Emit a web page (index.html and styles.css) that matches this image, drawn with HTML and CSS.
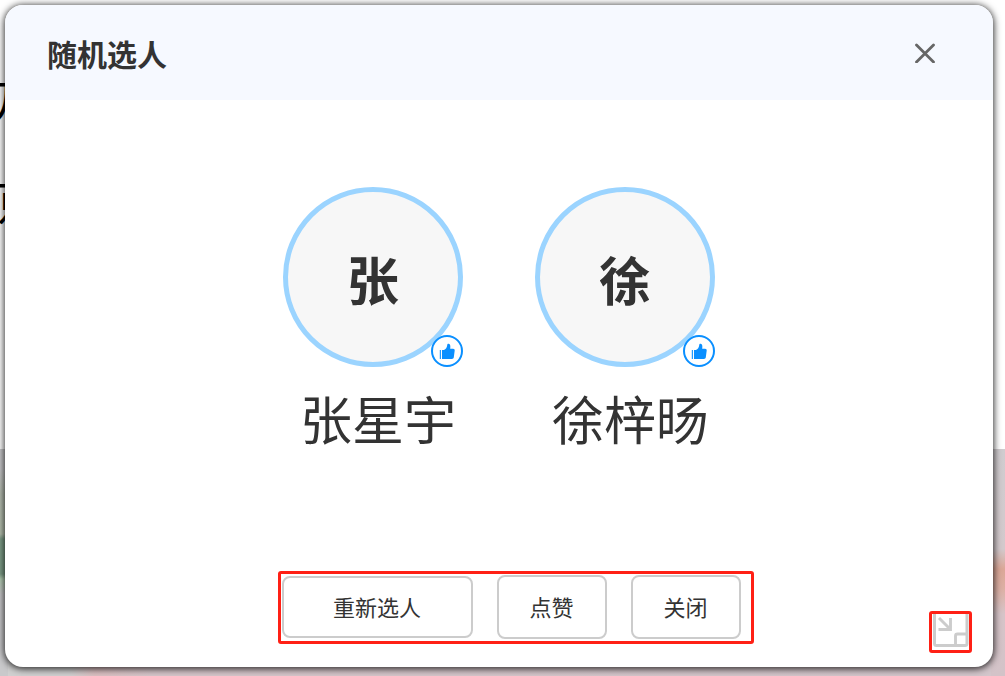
FILE: index.html
```html
<!DOCTYPE html>
<html lang="zh-CN">
<head>
<meta charset="utf-8">
<title>随机选人</title>
<link rel="stylesheet" href="styles.css">
</head>
<body>
<div class="backdrop" aria-hidden="true">
  <div class="backdrop-text"><span>万</span><span>原</span></div>
  <div class="backdrop-photo"></div>
</div>
<section class="dialog" role="dialog" aria-labelledby="dialog-title">
  <header class="dialog-header">
    <h1 class="dialog-title" id="dialog-title">随机选人</h1>
    <button class="icon-button" type="button" aria-label="关闭窗口">
      <svg width="20" height="20" viewBox="0 0 20 20" fill="none" stroke="#666" stroke-width="2.8" stroke-linecap="round"><path d="M1.5 2 18.5 19M18.5 2 1.5 19"/></svg>
    </button>
  </header>
  <main class="people">
    <article class="person">
      <div class="avatar">张
        <button class="like" type="button" aria-label="为张星宇点赞">
          <svg width="16" height="16" viewBox="0 0 16 16" fill="#0a8fff"><path d="M.8 7H1.900v9H.8zM3 7h1.900C6.800 6 8 4.500 8.200 2.200 8.300 1 8.900.7 9.700.8c1.600.3 1.900 2.300 1.500 5h2.900c1.100 0 1.700.8 1.600 1.700l-.9 6.800c-.1 1-.9 1.700-1.900 1.700H3z"/></svg>
        </button>
      </div>
      <p class="name">张星宇</p>
    </article>
    <article class="person">
      <div class="avatar">徐
        <button class="like" type="button" aria-label="为徐梓旸点赞">
          <svg width="16" height="16" viewBox="0 0 16 16" fill="#0a8fff"><path d="M.8 7H1.900v9H.8zM3 7h1.900C6.800 6 8 4.500 8.200 2.200 8.300 1 8.900.7 9.700.8c1.600.3 1.900 2.300 1.500 5h2.900c1.100 0 1.700.8 1.600 1.700l-.9 6.800c-.1 1-.9 1.700-1.900 1.700H3z"/></svg>
        </button>
      </div>
      <p class="name">徐梓旸</p>
    </article>
  </main>
  <footer class="dialog-footer">
    <div class="actions marked">
      <button class="action action-wide" type="button">重新选人</button>
      <button class="action" type="button">点赞</button>
      <button class="action" type="button">关闭</button>
    </div>
    <button class="minimize marked" type="button" aria-label="最小化">
      <svg width="37" height="36" viewBox="0 0 37 36" fill="none" stroke="#ccc" stroke-width="3"><path d="M2.500 0V29.500Q2.500 31.500 4.500 31.500H33Q35 31.500 35 29.500V0"/><path d="M23.500 31.500V22Q23.500 20 25.500 20H35M7 4 18 15M18.500 4V15.500H6.500" stroke-width="2.900"/></svg>
    </button>
  </footer>
</section>
</body>
</html>
```
FILE: styles.css
```css
* { box-sizing: border-box; }

body {
  display: flex;
  min-height: 100vh;
  margin: 0;
  padding: 5px 12px 9px 5px;
  color: #333;
  background: #fff;
  font-family: "Noto Sans CJK SC", sans-serif;
}

button {
  padding: 0;
  border: 0;
  color: inherit;
  background: transparent;
  font-family: inherit;
  cursor: pointer;
}

svg { display: block; }

/* Page content that lies under the dialog */
.backdrop {
  position: absolute;
  inset: 0;
  overflow: hidden;
}

.backdrop-text {
  position: absolute;
  top: 48px;
  left: -11px;
  display: grid;
  color: #000;
  font-size: 48px;
  line-height: 102px;
}

.backdrop-photo {
  position: absolute;
  inset: 449px 0 0;
  background:
    linear-gradient(#c9c9cb 0 20px, #b7bfb2 45px, #b7c2b0 85px, #7fa08a 90px, #7fa08a 125px, #b5d0b5 130px, #c9c9cb 145px) left / 8px 100% no-repeat,
    linear-gradient(#d0cccf, #d3c9cc 100px, #dba797 120px, #dcb0a4 140px, #d6c4c8 165px, #d3c3c8) right / 14px 100% no-repeat,
    linear-gradient(90deg, #d0d0d0 0 70px, #dcc0c2 95px, #d6c6ca 150px, #d3c6cb);
}

.dialog {
  position: relative;
  display: flex;
  flex: 1;
  flex-direction: column;
  border-radius: 18px;
  background: #fff;
  box-shadow: 0 1px 7px 1px rgba(0, 0, 0, 0.8);
}

.dialog-header {
  display: flex;
  align-items: center;
  justify-content: space-between;
  height: 95px;
  padding: 0 54px 0 42px;
  border-radius: 18px 18px 0 0;
  background: #f6f9ff;
}

.dialog-title {
  margin: 0;
  font-size: 30px;
  line-height: 44px;
}

.icon-button {
  padding: 4px;
}

.people {
  display: flex;
  flex: 1;
  justify-content: center;
  gap: 72px;
  padding-top: 87px;
}

.person {
  display: flex;
  flex-direction: column;
  align-items: center;
  width: 180px;
}

.avatar {
  position: relative;
  display: flex;
  align-items: center;
  justify-content: center;
  width: 180px;
  height: 180px;
  padding-top: 4px;
  border: 5px solid #9bd4ff;
  border-radius: 50%;
  background: #f7f7f7;
  font-size: 52px;
  font-weight: 700;
  line-height: 60px;
}

.like {
  position: absolute;
  right: -5px;
  bottom: -5px;
  display: grid;
  place-items: center;
  width: 32px;
  height: 32px;
  border: 2px solid #0a8fff;
  border-radius: 50%;
  background: #fff;
}

.name {
  margin: 21px 0 0;
  padding-left: 10px;
  font-size: 52px;
  line-height: 60px;
  white-space: nowrap;
}

.dialog-footer {
  display: grid;
  grid-template-columns: 1fr auto 1fr;
  align-items: end;
  padding: 0 21px 14px 54px;
}

.marked {
  border: 3px solid #ff2015;
  border-radius: 3px;
}

.actions {
  display: flex;
  grid-column: 2;
  align-items: center;
  gap: 24px;
  margin-bottom: 9px;
  padding: 1px 10px 2px 1px;
}

.action {
  width: 110px;
  height: 64px;
  padding-bottom: 2px;
  border: 2px solid #ccc;
  border-radius: 8px;
  background: #fff;
  font-size: 22px;
  line-height: 32px;
}

.action-wide {
  width: 191px;
  height: 62px;
}

.minimize {
  justify-self: end;
  width: 43px;
  height: 42px;
}
```
